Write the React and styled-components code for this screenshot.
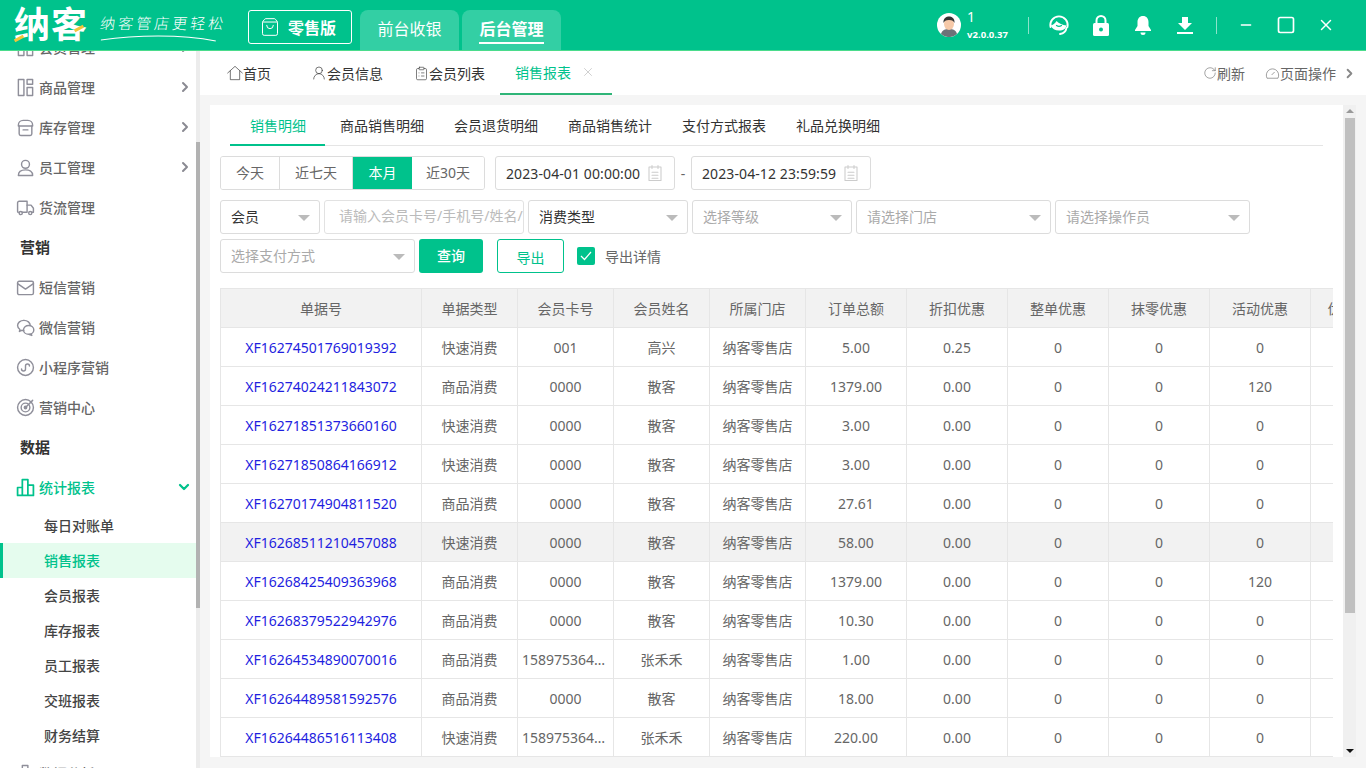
import React from 'react';
import styled, { createGlobalStyle } from 'styled-components';
import { ChevronRight, ChevronDown, ShoppingBag, UserRound, ClipboardList, RotateCw, X, Square, Minus } from 'lucide-react';

const primary = '#00c28c';

const GlobalStyle = createGlobalStyle`
  html, body { margin: 0; padding: 0; height: 100%; overflow: hidden; }
  body { font-family: "Noto Sans", "Noto Sans CJK SC", sans-serif; font-size: 14px; color: #333; background: #f5f5f5; }
  * { box-sizing: border-box; }
`;

const Page = styled.div`
  width: 1366px;
  height: 768px;
  display: flex;
  flex-direction: column;
  overflow: hidden;
`;

/* header */
const Header = styled.header`
  height: 51px;
  flex: none;
  display: flex;
  align-items: stretch;
  background: ${primary};
  border-bottom: 1px solid #4bdc8c;
  color: #fff;
`;
const Logo = styled.div`
  position: relative;
  width: 74px;
  margin-left: 14px;
  font-size: 36px;
  font-weight: 700;
  line-height: 50px;
  letter-spacing: 1px;
  white-space: nowrap;
`;
const Accent = styled.i`
  position: absolute;
  left: ${p => p.$left}px;
  top: ${p => p.$top}px;
  width: 10px;
  height: 3px;
  background: #f3c53a;
  transform: rotate(-28deg);
`;
const Slogan = styled.div`
  position: relative;
  width: 126px;
  margin-left: 12px;
  padding-top: 14px;
  font-size: 15px;
  font-weight: 300;
  letter-spacing: 3px;
  line-height: 18px;
  white-space: nowrap;
  transform: skewX(-8deg);
  svg { position: absolute; left: 2px; top: 34px; }
`;
const Edition = styled.div`
  margin: 10px 0 6px 22px;
  width: 104px;
  display: flex;
  align-items: center;
  padding-left: 11px;
  gap: 8px;
  border: 1px solid #fff;
  border-radius: 3px;
  font-size: 16px;
  font-weight: 700;
`;
const ModeTabs = styled.div`
  display: flex;
  gap: 3px;
  margin-left: 8px;
  padding-top: 10px;
`;
const ModeTab = styled.div`
  width: 99px;
  border-radius: 8px 8px 0 0;
  background: #33cfa4;
  font-size: 16px;
  font-weight: ${p => (p.$active ? 700 : 400)};
  text-align: center;
  span {
    display: inline-block;
    height: 34px;
    line-height: 38px;
    border-bottom: ${p => (p.$active ? '2px solid #fff' : 'none')};
  }
`;
const HeaderRight = styled.div`
  margin-left: auto;
  display: flex;
  align-items: center;
`;
const UserInfo = styled.div`
  display: flex;
  align-items: center;
  gap: 6px;
  width: 91px;
`;
const Version = styled.div`
  font-size: 14px;
  line-height: 16px;
  small { display: block; font-size: 9.6px; font-weight: 700; line-height: 14px; margin-top: 3px; }
`;
const Divider = styled.div`
  width: 1px;
  height: 17px;
  background: rgba(255,255,255,.55);
`;
const ToolIcons = styled.div`
  display: flex;
  align-items: center;
  width: 187px;
  padding-left: 9px;
  > div { width: 42px; display: flex; justify-content: center; }
`;
const WindowButtons = styled.div`
  display: flex;
  align-items: center;
  width: 149px;
  padding-left: 9px;
  > div { width: 40px; display: flex; justify-content: center; }
`;

/* body */
const Body = styled.div`
  flex: 1;
  min-height: 0;
  display: flex;
`;
const Aside = styled.aside`
  width: 200px;
  flex: none;
  display: flex;
  background: #fff;
`;
const MenuClip = styled.div`
  flex: 1;
  min-width: 0;
  overflow: hidden;
`;
const Menu = styled.div`
  margin-top: -24px;
`;
const MenuItem = styled.div`
  height: 40px;
  display: flex;
  align-items: center;
  padding-left: 16px;
  gap: 4px;
  color: ${p => (p.$active ? primary : '#666')};
  font-weight: 500;
  svg.arrow { margin-left: auto; margin-right: ${p => (p.$active ? 4 : 3)}px; color: ${p => (p.$active ? primary : '#8a8a92')}; }
`;
const MenuGroup = styled.div`
  height: 40px;
  padding-left: 20px;
  line-height: 40px;
  font-size: 15px;
  font-weight: 700;
  color: #333;
`;
const SubList = styled.div`
  padding-top: 1px;
`;
const SubItem = styled.div`
  height: 35px;
  line-height: 35px;
  padding-left: ${p => (p.$active ? 41 : 44)}px;
  font-weight: 500;
  color: ${p => (p.$active ? primary : '#444')};
  background: ${p => (p.$active ? '#e5fcee' : 'transparent')};
  border-left: ${p => (p.$active ? `3px solid ${primary}` : 'none')};
`;
const SideRail = styled.div`
  width: 4px;
  background: #ececec;
  div { height: 466px; margin-top: 91px; background: #b2b2b2; }
`;

const Main = styled.main`
  flex: 1;
  min-width: 0;
  display: flex;
  flex-direction: column;
`;
const PageTabs = styled.div`
  height: 44px;
  flex: none;
  display: flex;
  align-items: stretch;
  background: #fff;
  padding-left: 27px;
`;
const PageTab = styled.div`
  display: flex;
  align-items: center;
  margin-right: ${p => p.$gap}px;
  color: #333;
  white-space: nowrap;
`;
const ActiveTab = styled.div`
  width: 112px;
  margin-left: -15px;
  padding-left: 15px;
  display: flex;
  align-items: center;
  gap: 10px;
  color: ${primary};
  border-bottom: 2px solid #2fb578;
`;
const TabActions = styled.div`
  margin-left: auto;
  display: flex;
  align-items: center;
  color: #666;
  padding-right: 9px;
`;
const TabAction = styled.div`
  display: flex;
  align-items: center;
  margin-right: ${p => p.$gap}px;
`;
const Content = styled.div`
  flex: 1;
  min-height: 0;
  padding: 10px 10px 11px 10px;
`;
const Card = styled.div`
  height: 100%;
  display: flex;
  background: #fff;
`;
const CardBody = styled.div`
  flex: 1;
  min-width: 0;
  padding: 0 10px;
  overflow: hidden;
`;
const SubTabs = styled.div`
  height: 41px;
  margin: 0 10px;
  display: flex;
  border-bottom: 1px solid #e5e5e5;
`;
const SubTab = styled.div`
  height: 41px;
  line-height: 41px;
  padding: ${p => (p.$active ? '0 19px 0 20px' : '0 15px')};
  color: ${p => (p.$active ? primary : '#333')};
  border-bottom: ${p => (p.$active ? `2px solid ${primary}` : 'none')};
`;
const FilterRow = styled.div`
  display: flex;
  align-items: center;
  margin-top: ${p => p.$top}px;
  height: 34px;
`;
const QuickGroup = styled.div`
  display: flex;
  height: 34px;
  width: 265px;
  border: 1px solid #dcdcdc;
  border-radius: 3px;
  overflow: hidden;
`;
const Quick = styled.div`
  width: ${p => p.$w}px;
  line-height: 32px;
  text-align: center;
  color: ${p => (p.$active ? '#fff' : '#666')};
  background: ${p => (p.$active ? primary : '#fff')};
  border-right: ${p => (p.$last || p.$active ? 'none' : '1px solid #dcdcdc')};
`;
const DateField = styled.div`
  width: 180px;
  height: 34px;
  margin-left: ${p => p.$left}px;
  display: flex;
  align-items: center;
  justify-content: space-between;
  padding: 0 10px;
  border: 1px solid #dcdcdc;
  border-radius: 3px;
  color: #333;
  letter-spacing: .1px;
  white-space: nowrap;
`;
const Dash = styled.span`
  width: 16px;
  text-align: center;
  color: #666;
`;
const Select = styled.div`
  width: ${p => p.$w}px;
  height: 34px;
  flex: none;
  margin-right: 4px;
  display: flex;
  align-items: center;
  justify-content: space-between;
  padding: 0 9px 2px 10px;
  border: 1px solid #dcdcdc;
  border-radius: 3px;
  color: ${p => (p.$filled ? '#333' : '#aaa')};
  white-space: nowrap;
  overflow: hidden;
  &::after {
    content: '';
    width: 0;
    height: 0;
    margin-top: 3px;
    border-left: 6px solid transparent;
    border-right: 6px solid transparent;
    border-top: 6px solid #bbb;
  }
`;
const TextInput = styled.div`
  width: 200px;
  height: 34px;
  margin-right: 4px;
  padding-left: 14px;
  line-height: 30px;
  border: 1px solid #e2e2e2;
  border-radius: 3px;
  color: #bbb;
  white-space: nowrap;
  overflow: hidden;
`;
const QueryButton = styled.div`
  width: 64px;
  height: 34px;
  line-height: 34px;
  text-align: center;
  border-radius: 3px;
  color: #fff;
  font-weight: 500;
  background: ${primary};
`;
const ExportButton = styled.div`
  width: 67px;
  height: 34px;
  margin-left: 14px;
  line-height: 36px;
  text-align: center;
  border: 1px solid ${primary};
  border-radius: 3px;
  color: ${primary};
`;
const CheckLabel = styled.label`
  display: flex;
  align-items: center;
  gap: 10px;
  margin-left: 13px;
  color: #666;
`;
const CheckBox = styled.span`
  width: 18px;
  height: 18px;
  display: flex;
  align-items: center;
  justify-content: center;
  border-radius: 2px;
  background: ${primary};
  color: #fff;
`;
const TableClip = styled.div`
  margin-top: 15px;
  overflow: hidden;
`;
const Table = styled.table`
  width: 1167px;
  table-layout: fixed;
  border-collapse: separate;
  border-spacing: 0;
  border-top: 1px solid #e6e6e6;
  border-left: 1px solid #e6e6e6;
  th, td {
    height: 39px;
    padding: 0 4px;
    border-right: 1px solid #e6e6e6;
    border-bottom: 1px solid #e6e6e6;
    text-align: center;
    color: #666;
    font-weight: 400;
    white-space: nowrap;
    overflow: hidden;
    text-overflow: ellipsis;
  }
  th { background: #f2f2f2; }
`;
const Row = styled.tr`
  td { background: ${p => (p.$hover ? '#f2f2f2' : '#fff')}; }
`;
const OrderLink = styled.a`
  color: #1f1fe0;
  font-size: 14px;
`;
const CardRail = styled.div`
  width: 13px;
  flex: none;
  display: flex;
  flex-direction: column;
  align-items: center;
  background: #f0f0f0;
  justify-content: space-between;
  &::before, &::after {
    content: '';
    width: 0;
    height: 0;
    margin: 4px 0;
    border-left: 4px solid transparent;
    border-right: 4px solid transparent;
  }
  &::before { border-bottom: 4px solid #999; }
  &::after { border-top: 4px solid #111; }
`;
const Thumb = styled.div`
  position: absolute;
  width: 10px;
  height: 495px;
  margin-top: 13px;
  background: #c0c0c0;
`;

const Glyph = ({ size = 18, color = 'currentColor', width = 1.5, children }) => (
  <svg width={size} height={size} viewBox="0 0 24 24" fill="none" stroke={color} strokeWidth={width} strokeLinecap="round" strokeLinejoin="round" style={{ flex: 'none' }}>
    {children}
  </svg>
);

const menuIcon = {
  goods: <><rect x="3" y="2" width="7" height="20" /><rect x="14" y="2" width="7" height="6" /><rect x="14" y="12" width="7" height="10" /></>,
  stock: <><path d="M3 9a6 6 0 0 1 6-6h6a6 6 0 0 1 6 6v1H3z" /><path d="M4 10v10a2 2 0 0 0 2 2h12a2 2 0 0 0 2-2V10" /><path d="M9 15h6" /></>,
  staff: <><circle cx="12" cy="8" r="5" /><path d="M3 22c0-5 4-7 9-7s9 2 9 7z" /></>,
  truck: <><path d="M14 18H8M3 18a1 1 0 0 1-1-1V6a2 2 0 0 1 2-2h10v14" /><path d="M14 9h5l3 4v5h-2" /><circle cx="6" cy="19" r="2" /><circle cx="18" cy="19" r="2" /></>,
  mail: <><rect x="2" y="4" width="20" height="17" rx="2" /><path d="M2 7l10 7 10-7" /></>,
  wechat: <><path d="M10 3C5.500 3 2 6 2 9.500c0 2 1.200 3.800 3 5l-.7 2.500 3-1.500c.8.2 1.500.3 2.500.3" /><path d="M18 9.500C18 6 14.500 3 10 3" /><ellipse cx="16" cy="15" rx="6.500" ry="5.500" /><path d="M19 20l1 2-3-1.200" /></>,
  mini: <><circle cx="12" cy="12" r="10" /><path d="M7 14a2.500 2.500 0 1 0 5 0v-4a2.500 2.500 0 1 1 5 0" /></>,
  target: <><circle cx="12" cy="12" r="10" /><circle cx="12" cy="12" r="5.500" /><circle cx="12" cy="12" r="1.500" /><path d="M12 12l9-9" /></>,
  chart: <><path d="M2 12h6v10H2zM8 2h7v20H8zM15 9h7v13h-7z" /></>,
};

const SideItem = ({ icon, label, arrow, active }) => (
  <MenuItem $active={active}>
    <Glyph size={19} color={active ? primary : '#8f8f9a'} width={active ? 2.2 : 1.8}>{menuIcon[icon]}</Glyph>
    {label}
    {arrow && <ChevronRight className="arrow" size={16} strokeWidth={3} />}
    {active && <ChevronDown className="arrow" size={16} strokeWidth={3.4} />}
  </MenuItem>
);

const Calendar = () => (
  <Glyph size={18} color="#ccc" width={1.4}>
    <rect x="4" y="4" width="16" height="18" />
    <path d="M8 2v4M16 2v4M8 11h8M8 15h8M8 19h8" />
  </Glyph>
);

const columns = [201, 96, 96, 96, 96, 101, 101, 101, 101, 101, 76];
const heads = ['单据号', '单据类型', '会员卡号', '会员姓名', '所属门店', '订单总额', '折扣优惠', '整单优惠', '抹零优惠', '活动优惠', '优惠券'];
const rows = [
  ['XF16274501769019392', '快速消费', '001', '高兴', '5.00', '0.25', '0'],
  ['XF16274024211843072', '商品消费', '0000', '散客', '1379.00', '0.00', '120'],
  ['XF16271851373660160', '快速消费', '0000', '散客', '3.00', '0.00', '0'],
  ['XF16271850864166912', '快速消费', '0000', '散客', '3.00', '0.00', '0'],
  ['XF16270174904811520', '商品消费', '0000', '散客', '27.61', '0.00', '0'],
  ['XF16268511210457088', '快速消费', '0000', '散客', '58.00', '0.00', '0'],
  ['XF16268425409363968', '商品消费', '0000', '散客', '1379.00', '0.00', '120'],
  ['XF16268379522942976', '商品消费', '0000', '散客', '10.30', '0.00', '0'],
  ['XF16264534890070016', '商品消费', '15897536412', '张禾禾', '1.00', '0.00', '0'],
  ['XF16264489581592576', '商品消费', '0000', '散客', '18.00', '0.00', '0'],
  ['XF16264486516113408', '快速消费', '15897536412', '张禾禾', '220.00', '0.00', '0'],
];

export default function App() {
  return (
    <Page>
      <GlobalStyle />
      <Header>
        <Logo>纳客<Accent $left={0} $top={37} /><Accent $left={60} $top={27} /></Logo>
        <Slogan>
          纳客管店更轻松
          <svg width="118" height="8" viewBox="0 0 118 8" fill="none"><path d="M1 6C35 1 80 0 116 7" stroke="#fff" strokeWidth="1" /></svg>
        </Slogan>
        <Edition><ShoppingBag size={20} strokeWidth={1.2} />零售版</Edition>
        <ModeTabs>
          <ModeTab><span>前台收银</span></ModeTab>
          <ModeTab $active><span>后台管理</span></ModeTab>
        </ModeTabs>
        <HeaderRight>
          <UserInfo>
            <svg width="24" height="24" viewBox="0 0 24 24">
              <circle cx="12" cy="12" r="12" fill="#fff" />
              <path d="M4 21c1-4 4-5 8-5s7 1 8 5a12 12 0 0 1-16 0z" fill="#6d7278" />
              <ellipse cx="12" cy="11" rx="5" ry="6" fill="#f6c9a8" />
              <path d="M6.500 10c-.5-5 3-6.500 5.500-6.500s6 1.500 5.500 6.500c-1-2-2-3-5.500-3s-4.500 1-5.500 3z" fill="#333" />
            </svg>
            <Version>1<small>v2.0.0.37</small></Version>
          </UserInfo>
          <Divider />
          <ToolIcons>
            <div>
              <svg width="22" height="22" viewBox="0 0 22 22" fill="none" stroke="#fff" strokeWidth="1.800" strokeLinecap="round">
                <path d="M2.500 13a8.700 8.700 0 1 1 17 0" />
                <path d="M2.500 11.500c2.500-.5 4.500-2 6-4.500 2.500 2.500 6 4 10 4.500-.5 3-3 5-7.500 5-4 0-7-2-8.500-5z" fill="#fff" stroke="none" />
                <path d="M8.500 11.500c1.500 1 3.500 1 5 0" stroke={primary} strokeWidth="1.200" />
                <path d="M18.500 14c-.5 3-3 5.500-6.500 6" />
              </svg>
            </div>
            <div>
              <svg width="16" height="21" viewBox="0 0 16 21">
                <path d="M3.500 9V5.500a4.500 4.500 0 0 1 9 0V9" fill="none" stroke="#fff" strokeWidth="2" />
                <rect y="8" width="16" height="13" rx="1.500" fill="#fff" />
                <circle cx="8" cy="14.500" r="2" fill={primary} />
              </svg>
            </div>
            <div>
              <svg width="16" height="19" viewBox="0 0 16 19" fill="#fff">
                <path d="M8 0c3.500 0 5.500 2.700 5.500 6v4l2.500 4v1H0v-1l2.500-4V6C2.500 2.700 4.500 0 8 0z" />
                <path d="M5.500 16.500h5a2.500 2.500 0 0 1-5 0z" />
              </svg>
            </div>
            <div>
              <svg width="16" height="17" viewBox="0 0 16 17" fill="#fff">
                <path d="M5 0h6v6h4l-7 7-7-7h4z" />
                <rect y="15" width="16" height="2" />
              </svg>
            </div>
          </ToolIcons>
          <Divider />
          <WindowButtons>
            <div><Minus size={16} color="#fff" strokeWidth={2} /></div>
            <div><Square size={20} color="#fff" strokeWidth={2} /></div>
            <div><X size={18} color="#fff" strokeWidth={2} /></div>
          </WindowButtons>
        </HeaderRight>
      </Header>
      <Body>
        <Aside>
          <MenuClip>
            <Menu>
              <SideItem icon="goods" label="会员管理" arrow />
              <SideItem icon="goods" label="商品管理" arrow />
              <SideItem icon="stock" label="库存管理" arrow />
              <SideItem icon="staff" label="员工管理" arrow />
              <SideItem icon="truck" label="货流管理" />
              <MenuGroup>营销</MenuGroup>
              <SideItem icon="mail" label="短信营销" />
              <SideItem icon="wechat" label="微信营销" />
              <SideItem icon="mini" label="小程序营销" />
              <SideItem icon="target" label="营销中心" />
              <MenuGroup>数据</MenuGroup>
              <SideItem icon="chart" label="统计报表" active />
              <SubList>
                <SubItem>每日对账单</SubItem>
                <SubItem $active>销售报表</SubItem>
                <SubItem>会员报表</SubItem>
                <SubItem>库存报表</SubItem>
                <SubItem>员工报表</SubItem>
                <SubItem>交班报表</SubItem>
                <SubItem>财务结算</SubItem>
              </SubList>
              <SideItem icon="chart" label="数据分析" />
            </Menu>
          </MenuClip>
          <SideRail><div /></SideRail>
        </Aside>
        <Main>
          <PageTabs>
            <PageTab $gap={40}>
              <Glyph size={16} width={1}><path d="M1 12L12 2l11 10" /><path d="M5 9v13h14V9" /></Glyph>
              首页
            </PageTab>
            <PageTab $gap={31}><UserRound size={16} strokeWidth={1} />会员信息</PageTab>
            <PageTab $gap={30}><ClipboardList size={15} strokeWidth={1} />会员列表</PageTab>
            <ActiveTab>销售报表<X size={14} color="#bbb" strokeWidth={1.2} /></ActiveTab>
            <TabActions>
              <TabAction $gap={20}><RotateCw size={14} strokeWidth={1} />刷新</TabAction>
              <TabAction $gap={6}>
                <Glyph size={15} width={1}><path d="M3 19a10 10 0 1 1 18 0z" /><path d="M11 14l4-4" /></Glyph>
                页面操作
              </TabAction>
              <ChevronRight size={15} color="#888" strokeWidth={3} />
            </TabActions>
          </PageTabs>
          <Content>
            <Card>
              <CardBody>
                <SubTabs>
                  <SubTab $active>销售明细</SubTab>
                  <SubTab>商品销售明细</SubTab>
                  <SubTab>会员退货明细</SubTab>
                  <SubTab>商品销售统计</SubTab>
                  <SubTab>支付方式报表</SubTab>
                  <SubTab>礼品兑换明细</SubTab>
                </SubTabs>
                <FilterRow $top={10}>
                  <QuickGroup>
                    <Quick $w={59}>今天</Quick>
                    <Quick $w={73}>近七天</Quick>
                    <Quick $w={59} $active>本月</Quick>
                    <Quick $w={72} $last>近30天</Quick>
                  </QuickGroup>
                  <DateField $left={10}>2023-04-01 00:00:00<Calendar /></DateField>
                  <Dash>-</Dash>
                  <DateField $left={0}>2023-04-12 23:59:59<Calendar /></DateField>
                </FilterRow>
                <FilterRow $top={10}>
                  <Select $w={100} $filled>会员</Select>
                  <TextInput>请输入会员卡号/手机号/姓名/</TextInput>
                  <Select $w={160} $filled>消费类型</Select>
                  <Select $w={160}>选择等级</Select>
                  <Select $w={195}>请选择门店</Select>
                  <Select $w={195}>请选择操作员</Select>
                </FilterRow>
                <FilterRow $top={5}>
                  <Select $w={195}>选择支付方式</Select>
                  <QueryButton>查询</QueryButton>
                  <ExportButton>导出</ExportButton>
                  <CheckLabel>
                    <CheckBox><svg width="12" height="10" viewBox="0 0 12 10" fill="none"><path d="M1 5l3.500 3.500L11 1" stroke="#fff" strokeWidth="1.200" /></svg></CheckBox>
                    导出详情
                  </CheckLabel>
                </FilterRow>
                <TableClip>
                  <Table>
                    <colgroup>
                      {columns.map((w, i) => <col key={i} style={{ width: w }} />)}
                    </colgroup>
                    <thead>
                      <tr>{heads.map(h => <th key={h}>{h}</th>)}</tr>
                    </thead>
                    <tbody>
                      {rows.map((r, i) => (
                        <Row key={r[0]} $hover={i === 5}>
                          <td><OrderLink>{r[0]}</OrderLink></td>
                          <td>{r[1]}</td>
                          <td>{r[2]}</td>
                          <td>{r[3]}</td>
                          <td>纳客零售店</td>
                          <td>{r[4]}</td>
                          <td>{r[5]}</td>
                          <td>0</td>
                          <td>0</td>
                          <td>{r[6]}</td>
                          <td>0</td>
                        </Row>
                      ))}
                    </tbody>
                  </Table>
                </TableClip>
              </CardBody>
              <CardRail><Thumb /></CardRail>
            </Card>
          </Content>
        </Main>
      </Body>
    </Page>
  );
}
